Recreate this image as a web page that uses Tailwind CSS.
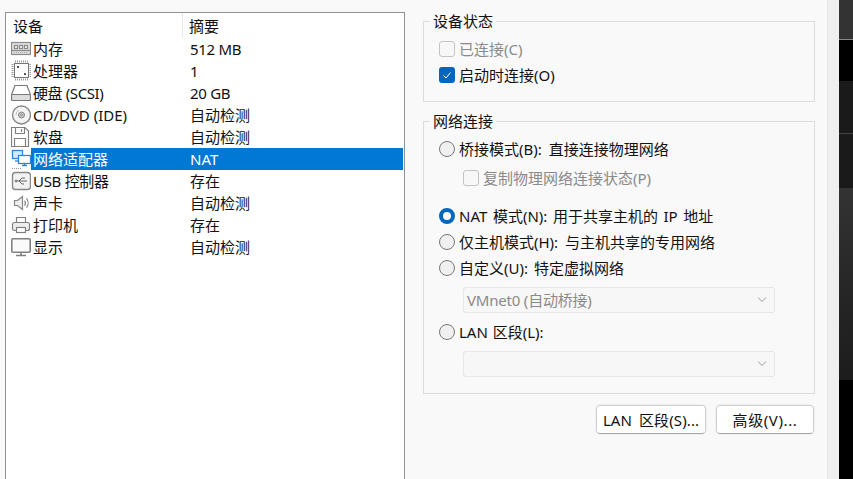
<!DOCTYPE html>
<html lang="zh-CN">
<head>
    <meta charset="UTF-8">
    <title>网络适配器</title>
    <script src="https://cdn.jsdelivr.net/npm/@tailwindcss/browser@4"></script>
</head>
<body class="w-[853px] h-[479px] overflow-hidden bg-[#f9f9f9] text-[15px] leading-[22px] text-[#111] font-['Noto_Sans','Noto_Sans_CJK_SC',sans-serif]">
<div class="flex h-[479px]">
    <!-- Device list -->
    <div class="w-[423px] shrink-0 pl-[5px] pt-[12px]">
        <div class="w-[400px] h-[480px] bg-white border border-[#8e9198]">
            <div class="flex h-[25px] items-center">
                <div class="w-[177px] h-full pl-[7px] border-r border-[#e5e5e5] flex items-center">设备</div>
                <div class="pl-[6px]">摘要</div>
            </div>
            <!-- 内存 -->
            <div class="flex h-[22px] items-center pl-[5px]">
                <svg class="w-[20px] h-[22px] shrink-0" viewBox="0 0 20 22" fill="none" stroke="#8a8a8a" stroke-width="1.2">
                    <rect x="0.5" y="4.5" width="19" height="12" fill="#dedede"/>
                    <path d="M0.5 12.5h19" />
                    <rect x="3.5" y="7.5" width="3" height="3" fill="#fff"/><rect x="8.5" y="7.5" width="3" height="3" fill="#fff"/><rect x="13.5" y="7.5" width="3" height="3" fill="#fff"/>
                    <path d="M3 14.5h14" stroke-dasharray="1 1" stroke="#aaa"/>
                </svg>
                <div class="w-[152px] pl-[2px] shrink-0">内存</div><div class="pl-[7px] tracking-[-0.3px]">512 MB</div>
            </div>
            <!-- 处理器 -->
            <div class="flex h-[22px] items-center pl-[5px]">
                <svg class="w-[20px] h-[22px] shrink-0" viewBox="0 0 20 22" fill="none" stroke="#777">
                    <rect x="3.5" y="3.5" width="14" height="14" fill="#fff" stroke="#777"/>
                    <path d="M4 1.5h13M4 19.5h13M1.5 4v13M19.5 4v13" stroke-dasharray="1 1" stroke="#999" stroke-width="2"/>
                    <rect x="6" y="6" width="2" height="2" fill="#555" stroke="none"/><rect x="13" y="13" width="2" height="2" fill="#555" stroke="none"/>
                </svg>
                <div class="w-[152px] pl-[2px] shrink-0">处理器</div><div class="pl-[7px]">1</div>
            </div>
            <!-- 硬盘 -->
            <div class="flex h-[22px] items-center pl-[5px]">
                <svg class="w-[20px] h-[22px] shrink-0" viewBox="0 0 20 22" fill="none" stroke="#777" stroke-width="1.2">
                    <path d="M0.5 12.5 L4 3.5 H16 L19.5 12.5"/>
                    <rect x="0.5" y="12.5" width="19" height="6" rx="1" fill="#ddd"/>
                </svg>
                <div class="w-[152px] pl-[2px] shrink-0 tracking-[-0.4px]">硬盘 (SCSI)</div><div class="pl-[7px] tracking-[-0.3px]">20 GB</div>
            </div>
            <!-- CD/DVD -->
            <div class="flex h-[22px] items-center pl-[5px]">
                <svg class="w-[20px] h-[22px] shrink-0" viewBox="0 0 20 22" fill="none" stroke="#888">
                    <circle cx="10.5" cy="11" r="9" stroke-width="1.4" fill="#f4f4f4"/>
                    <circle cx="10.5" cy="11" r="3" fill="#ccc"/>
                    <circle cx="10.5" cy="11" r="1" fill="#fff"/>
                    <path d="M5 11a5.5 5.5 0 0 1 3-5" stroke="#bbb"/>
                </svg>
                <div class="w-[152px] pl-[2px] shrink-0">CD/DVD (IDE)</div><div class="pl-[7px]">自动检测</div>
            </div>
            <!-- 软盘 -->
            <div class="flex h-[22px] items-center pl-[5px]">
                <svg class="w-[20px] h-[22px] shrink-0" viewBox="0 0 20 22" fill="none" stroke="#808080" stroke-width="1.2">
                    <path d="M0.5 1.5H14L17.5 5V20.5H0.5Z" fill="#fff"/>
                    <path d="M4.5 1.5V7.5H13.5V1.5M3.5 20.5V12.5H14.5V20.5"/>
                    <path d="M10.5 3V6" />
                </svg>
                <div class="w-[152px] pl-[2px] shrink-0">软盘</div><div class="pl-[7px]">自动检测</div>
            </div>
            <!-- 网络适配器 (selected) -->
            <div class="flex h-[22px] items-center pl-[5px]">
                <svg class="w-[20px] h-[22px] shrink-0" viewBox="0 0 20 22" fill="none" stroke="#2f86d6" stroke-width="1.3">
                    <rect x="1.5" y="2.5" width="10" height="8" fill="#d7ebfb"/>
                    <path d="M4 13h4" />
                    <rect x="7.5" y="7.5" width="12" height="8" fill="#fff"/>
                    <path d="M13.5 15.5v2M11 17.5h5"/>
                    <path d="M1 20.5h9" stroke="#9a9a9a" stroke-dasharray="1 1" stroke-width="1"/>
                </svg>
                <div class="flex flex-1 h-[22px] mr-[1px] bg-[#0078d4] text-white">
                    <div class="w-[152px] pl-[2px] shrink-0">网络适配器</div><div class="pl-[7px]">NAT</div>
                </div>
            </div>
            <!-- USB -->
            <div class="flex h-[22px] items-center pl-[5px]">
                <svg class="w-[20px] h-[22px] shrink-0" viewBox="0 0 20 22" fill="none" stroke="#888">
                    <rect x="1.5" y="2.5" width="18" height="17" rx="3" stroke-width="1.4" fill="#f2f2f2"/>
                    <path d="M5 11h11M8 11l3-3h3M8 11l3 3h2" stroke="#666"/>
                    <circle cx="5" cy="11" r="1" fill="#666"/>
                </svg>
                <div class="w-[152px] pl-[2px] shrink-0 tracking-[-0.3px]">USB 控制器</div><div class="pl-[7px]">存在</div>
            </div>
            <!-- 声卡 -->
            <div class="flex h-[22px] items-center pl-[5px]">
                <svg class="w-[20px] h-[22px] shrink-0" viewBox="0 0 20 22" fill="none" stroke="#888" stroke-width="1.2">
                    <path d="M3.5 8.5H6.5L11.5 4.5V17.5L6.5 13.5H3.5Z" fill="#eee"/>
                    <path d="M13.5 8.5a4 4 0 0 1 0 5M15.5 6.5a7 7 0 0 1 0 9"/>
                </svg>
                <div class="w-[152px] pl-[2px] shrink-0">声卡</div><div class="pl-[7px]">自动检测</div>
            </div>
            <!-- 打印机 -->
            <div class="flex h-[22px] items-center pl-[5px]">
                <svg class="w-[20px] h-[22px] shrink-0" viewBox="0 0 20 22" fill="none" stroke="#808080" stroke-width="1.2">
                    <path d="M5.5 8.5V3.5H14.5V8.5"/>
                    <rect x="1.5" y="8.5" width="17" height="8" rx="2" fill="#eee"/>
                    <rect x="5.5" y="13.5" width="9" height="5" fill="#fff"/>
                </svg>
                <div class="w-[152px] pl-[2px] shrink-0">打印机</div><div class="pl-[7px]">存在</div>
            </div>
            <!-- 显示 -->
            <div class="flex h-[22px] items-center pl-[5px]">
                <svg class="w-[20px] h-[22px] shrink-0" viewBox="0 0 20 22" fill="none" stroke="#808080" stroke-width="1.6">
                    <rect x="0.8" y="2.8" width="18.4" height="13.5" rx="1" fill="#fafafa"/>
                    <path d="M10 17v2M5 19.5h10"/>
                </svg>
                <div class="w-[152px] pl-[2px] shrink-0">显示</div><div class="pl-[7px]">自动检测</div>
            </div>
        </div>
    </div>

    <!-- Settings -->
    <div class="w-[392px] shrink-0 pt-[21px]">
        <div class="relative h-[81px] border border-[#dcdcdc] pl-[15px] pt-[16px]">
            <div class="absolute left-[6px] top-[-12px] px-[3px] bg-[#f9f9f9]">设备状态</div>
            <div class="flex flex-col gap-[4px]">
                <div class="flex items-center gap-[4px] h-[22px] text-[#8a8a8a]">
                    <span class="w-[16px] h-[16px] rounded-[3px] border border-[#c4c4c4] bg-[#f7f7f7]"></span>已连接(C)
                </div>
                <div class="flex items-center gap-[4px] h-[22px]">
                    <span class="w-[16px] h-[16px] rounded-[3px] bg-[#0067c0] flex items-center justify-center">
                        <svg class="w-[10px] h-[10px]" viewBox="0 0 10 10" fill="none" stroke="#fff"><path d="M1.5 5.5L4 8L8.5 2.5"/></svg>
                    </span>启动时连接(O)
                </div>
            </div>
        </div>

        <div class="relative h-[273px] mt-[19px] border border-[#dcdcdc] pl-[15px] pt-[16px]">
            <div class="absolute left-[6px] top-[-12px] px-[3px] bg-[#f9f9f9]">网络连接</div>
            <div class="flex items-center gap-[4px] h-[22px] [word-spacing:3px]">
                <span class="w-[16px] h-[16px] rounded-full border border-[#777] bg-[#f0f0f0]"></span>桥接模式(B): 直接连接物理网络
            </div>
            <div class="flex items-center gap-[4px] h-[22px] mt-[7px] ml-[24px] text-[#8a8a8a]">
                <span class="w-[16px] h-[16px] rounded-[3px] border border-[#c4c4c4] bg-[#f7f7f7]"></span>复制物理网络连接状态(P)
            </div>
            <div class="flex items-center gap-[4px] h-[22px] mt-[16px] [word-spacing:1.7px]">
                <span class="w-[16px] h-[16px] rounded-full border-[4px] border-[#0067c0] bg-white"></span>NAT 模式(N): 用于共享主机的 IP 地址
            </div>
            <div class="flex items-center gap-[4px] h-[22px] mt-[4px] [word-spacing:3px]">
                <span class="w-[16px] h-[16px] rounded-full border border-[#777] bg-[#f0f0f0]"></span>仅主机模式(H): 与主机共享的专用网络
            </div>
            <div class="flex items-center gap-[4px] h-[22px] mt-[4px] [word-spacing:2px]">
                <span class="w-[16px] h-[16px] rounded-full border border-[#777] bg-[#f0f0f0]"></span>自定义(U): 特定虚拟网络
            </div>
            <div class="flex items-center justify-between w-[312px] h-[26px] mt-[8px] ml-[24px] pl-[3px] pr-[7px] rounded-[3px] border border-[#e6e6e6] bg-[#f7f7f7] text-[#8a8a8a] tracking-[-0.2px]">
                VMnet0 (自动桥接)
                <svg class="w-[10px] h-[6px]" viewBox="0 0 10 6" fill="none" stroke="#9a9a9a"><path d="M1 0.5L5 4.5L9 0.5"/></svg>
            </div>
            <div class="flex items-center gap-[4px] h-[22px] mt-[8px] [word-spacing:1px]">
                <span class="w-[16px] h-[16px] rounded-full border border-[#777] bg-[#f0f0f0]"></span>LAN 区段(L):
            </div>
            <div class="flex items-center justify-end w-[312px] h-[26px] mt-[8px] ml-[24px] pr-[7px] rounded-[3px] border border-[#e6e6e6] bg-[#f7f7f7]">
                <svg class="w-[10px] h-[6px]" viewBox="0 0 10 6" fill="none" stroke="#9a9a9a"><path d="M1 0.5L5 4.5L9 0.5"/></svg>
            </div>
        </div>

        <div class="flex justify-end gap-[10px] mt-[11px] mr-[1px]">
            <button class="w-[110px] h-[29px] rounded-[4px] bg-white border border-[#d0d0d0] border-b-[#a8a8a8] outline outline-[#efefef] [word-spacing:3px] tracking-[0.1px]">LAN 区段(S)...</button>
            <button class="w-[98px] h-[29px] rounded-[4px] bg-white border border-[#d0d0d0] border-b-[#a8a8a8] outline outline-[#efefef] tracking-[0.6px]">高级(V)...</button>
        </div>
    </div>

    <!-- Window edge -->
    <div class="w-[13px] shrink-0 border-r border-[#e6e6e6]"></div>
    <div class="w-[11px] shrink-0 bg-[#efefef]"></div>

    <!-- Dark strip behind the dialog -->
    <div class="w-[14px] shrink-0 flex flex-col">
        <div class="h-[40px] bg-[#333] border-b border-[#888]"></div>
        <div class="h-[41px] bg-black"></div>
        <div class="h-[53px] bg-[#1a1a1a] border-b border-[#444]"></div>
        <div class="h-[54px] bg-[#1a1a1a]"></div>
        <div class="h-[192px] bg-gradient-to-b from-[#333] to-[#1c1c1c]"></div>
        <div class="flex-1 bg-black"></div>
    </div>
</div>
</body>
</html>
